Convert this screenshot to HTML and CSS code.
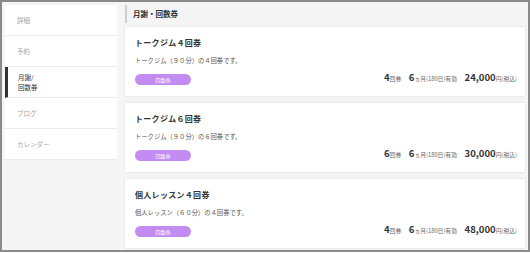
FILE: index.html
```html
<!DOCTYPE html>
<html lang="ja">
<head>
  <meta charset="UTF-8">
  <title>月謝・回数券</title>
  <link rel="stylesheet" href="styles.css">
</head>
<body>
  <div class="frame">
    <!-- side menu -->
    <ul class="side">
      <li>詳細</li>
      <li>予約</li>
      <li class="active">月謝/<br>回数券</li>
      <li>ブログ</li>
      <li>カレンダー</li>
    </ul>

    <div class="main">
      <h2 class="heading">月謝・回数券</h2>

      <div class="card">
        <div class="info">
          <h3>トークジム４回券</h3>
          <p>トークジム（９０分）の４回券です。</p>
          <span class="badge">回数券</span>
        </div>
        <div class="price">
          <b>4</b><small>回券</small>
          <b class="sp">6</b><small>ヵ月(180日)有効</small>
          <b class="sp">24,000</b><small>円(税込)</small>
        </div>
      </div>

      <div class="card">
        <div class="info">
          <h3>トークジム６回券</h3>
          <p>トークジム（９０分）の６回券です。</p>
          <span class="badge">回数券</span>
        </div>
        <div class="price">
          <b>6</b><small>回券</small>
          <b class="sp">6</b><small>ヵ月(180日)有効</small>
          <b class="sp">30,000</b><small>円(税込)</small>
        </div>
      </div>

      <div class="card">
        <div class="info">
          <h3>個人レッスン４回券</h3>
          <p>個人レッスン（６０分）の４回券です。</p>
          <span class="badge">回数券</span>
        </div>
        <div class="price">
          <b>4</b><small>回券</small>
          <b class="sp">6</b><small>ヵ月(180日)有効</small>
          <b class="sp">48,000</b><small>円(税込)</small>
        </div>
      </div>
    </div>
  </div>
</body>
</html>
```

FILE: styles.css
```css
* {
  box-sizing: border-box;
}
body {
  margin: 0;
  font-family: "Noto Sans CJK JP", "Noto Sans", sans-serif;
  color: #333;
}
.frame {
  width: 530px;
  height: 252px;
  border: 2px solid #8a8a8a;
  background: #f5f5f5;
  padding: 3px;
  display: flex;
  gap: 8px;
  overflow: hidden;
}
.side {
  list-style: none;
  margin: 0;
  padding: 0;
  width: 112px;
  flex-shrink: 0;
}
.side li {
  height: 31px;
  background: #fff;
  border-bottom: 1px solid #ebebeb;
  padding-left: 12px;
  font-size: 6.5px;
  color: #a5a5a5;
  display: flex;
  align-items: center;
}
.side li.active {
  border-left: 3px solid #333;
  padding-left: 10px;
  color: #333;
  line-height: 10px;
}
.main {
  flex: 1;
}
.heading {
  margin: 0 0 4px;
  height: 18px;
  border-left: 2px solid #cfcfcf;
  padding-left: 6px;
  font-size: 7.5px;
  font-weight: bold;
  line-height: 18px;
}
.card {
  height: 69px;
  margin-bottom: 7px;
  background: #fff;
  box-shadow: 0 0 2px rgba(0, 0, 0, 0.12);
  padding: 11px 8px 11px 10px;
  display: flex;
  justify-content: space-between;
  align-items: flex-end;
}
.info h3 {
  margin: 0;
  font-size: 8px;
  line-height: 10px;
  letter-spacing: 0.3px;
}
.info p {
  margin: 9px 0 0;
  font-size: 6.3px;
  line-height: 8px;
  color: #555;
}
.badge {
  display: block;
  margin-top: 9px;
  width: 56px;
  height: 11px;
  border-radius: 6px;
  background: #c38cf2;
  color: #fff;
  font-size: 5px;
  line-height: 11px;
  text-align: center;
}
.price {
  line-height: 10px;
  padding-bottom: 1px;
  white-space: nowrap;
}
.price b {
  font-size: 9.5px;
  color: #333;
}
.price b.sp {
  margin-left: 4px;
}
.price small {
  font-size: 5.8px;
  color: #666;
}
```
